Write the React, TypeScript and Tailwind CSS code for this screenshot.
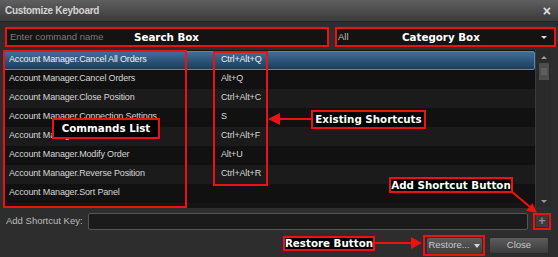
import React from "react";

const commands: { name: string; keys: string }[] = [
  { name: "Account Manager.Cancel All Orders", keys: "Ctrl+Alt+Q" },
  { name: "Account Manager.Cancel Orders", keys: "Alt+Q" },
  { name: "Account Manager.Close Position", keys: "Ctrl+Alt+C" },
  { name: "Account Manager.Connection Settings", keys: "S" },
  { name: "Account Manager.Flatten All", keys: "Ctrl+Alt+F" },
  { name: "Account Manager.Modify Order", keys: "Alt+U" },
  { name: "Account Manager.Reverse Position", keys: "Ctrl+Alt+R" },
  { name: "Account Manager.Sort Panel", keys: "" },
];

const ui = "font-['Liberation_Sans',Arial,sans-serif]";
const tag =
  "absolute flex items-center justify-center whitespace-nowrap bg-black border-2 border-[#ee1111] font-['DejaVu_Sans',Verdana,sans-serif] font-bold text-[10.3px] text-white leading-none";

function Arrows() {
  return (
    <svg
      className="pointer-events-none absolute left-0 top-0"
      width="558"
      height="257"
      viewBox="0 0 558 257"
    >
      {/* existing shortcuts */}
      <line x1="311" y1="119" x2="279" y2="119" stroke="#ee1111" strokeWidth="2" />
      <polygon points="268,119 280,113 280,125" fill="#ee1111" />
      {/* add shortcut */}
      <line x1="511" y1="191" x2="530" y2="207" stroke="#ee1111" strokeWidth="2" />
      <polygon points="537,213 532.5,203.3 526,210.8" fill="#ee1111" />
      {/* restore */}
      <line x1="375" y1="243" x2="412" y2="243" stroke="#ee1111" strokeWidth="2" />
      <polygon points="422,243 411,237 411,249" fill="#ee1111" />
    </svg>
  );
}

export default function App() {
  return (
    <div
      className={`relative h-[257px] w-[558px] overflow-hidden bg-[#2d2d2d] text-[#d6d6d6] ${ui}`}
    >
      {/* title bar */}
      <div className="flex h-[22px] items-center justify-between border-b border-[#262626] bg-linear-to-b from-[#5f5f5f] to-[#3b3b3b] pl-[5px] pr-[7px]">
        <span className="text-[10px] font-bold tracking-[-0.3px] text-[#d4d4d4]">
          Customize Keyboard
        </span>
        <span className="text-[14px] font-bold leading-none text-[#e0e0e0]">×</span>
      </div>

      <div className="pl-[3px]">
        {/* search + category */}
        <div className="mt-[5px] flex h-[20px] gap-[6px] pl-[2px]">
          <div className="relative flex w-[324px] items-center border-2 border-[#ee1111] bg-[#131313] pl-[3px]">
            <span className="text-[9.5px] text-[#7a7a7a]">Enter command name</span>
            <span className="absolute left-[127px] top-[3px] font-['DejaVu_Sans',Verdana,sans-serif] text-[10.3px] font-bold leading-none text-white">
              Search Box
            </span>
          </div>
          <div className="relative flex w-[221px] items-center justify-between border-2 border-[#ee1111] bg-[#131313] pl-[1px] pr-[7px]">
            <span className="text-[9.5px] text-[#bdbdbd]">All</span>
            <span className="absolute left-[65px] top-[3px] font-['DejaVu_Sans',Verdana,sans-serif] text-[10.3px] font-bold leading-none text-white">
              Category Box
            </span>
            <span className="h-0 w-0 border-x-[3px] border-t-[3px] border-x-transparent border-t-[#dcdcdc]" />
          </div>
        </div>

        {/* command list */}
        <div className="relative mt-[3px] flex h-[158px] w-[548px] bg-[#151515]">
          <div className="flex-1 pt-[0.5px]">
            {commands.map((c, i) => (
              <div
                key={c.name}
                className={
                  i === 0
                    ? "flex h-[19px] items-center rounded-[2px] border border-[#5288b8] bg-linear-to-b from-[#3f6f98] to-[#1c3d5b] text-[#f0f0f0]"
                    : `flex h-[19px] items-center border border-transparent ${
                        i % 2 === 1 ? "bg-[#111111]" : "bg-[#1b1b1b]"
                      }`
                }
              >
                <span className="w-[217px] pl-[5px] text-[9px] tracking-[-0.15px]">
                  {c.name}
                </span>
                <span className="text-[9px] tracking-[-0.15px]">{c.keys}</span>
              </div>
            ))}
          </div>

          {/* scrollbar */}
          <div className="flex w-[16px] flex-col items-center border-l border-[#3a3a3a] bg-[#2a2a2a] pt-[6px]">
            <span className="h-0 w-0 border-x-[3px] border-b-[3px] border-x-transparent border-b-[#9a9a9a]" />
            <div className="mt-[4px] flex h-[17px] w-[10px] items-center justify-center bg-[#4d4d4d]">
              <div className="h-[7px] w-[6px] bg-[#5e5e5e]" />
            </div>
            <div className="flex-1" />
            <span className="mb-[5px] h-0 w-0 border-x-[3px] border-t-[3px] border-x-transparent border-t-[#9a9a9a]" />
          </div>

          {/* highlighted columns */}
          <div className="pointer-events-none absolute left-0 top-0 h-[158px] w-[184px] border-2 border-[#ee1111]" />
          <div className="pointer-events-none absolute left-[210px] top-[1px] h-[135px] w-[55px] border-2 border-[#ee1111]" />
        </div>

        {/* add shortcut */}
        <div className="mt-[4px] flex h-[18px] items-center">
          <span className="w-[85px] pl-[3px] text-[9.5px] text-[#bcbcbc]">Add Shortcut Key:</span>
          <div className="h-[17px] w-[440px] rounded-[2px] border border-[#555555] bg-[#1b1b1b]" />
          <div className="ml-[5px] flex h-[17px] w-[18px] items-center justify-center border-2 border-[#ee1111]">
            <div className="flex h-[12px] w-[12px] items-center justify-center bg-[#3c3c3c] text-[12px] font-bold leading-none text-[#8c8c8c]">
              +
            </div>
          </div>
        </div>

        {/* footer buttons */}
        <div className="mt-[5px] flex items-center justify-end pr-[9px]">
          <div className="flex h-[21px] w-[62px] items-center justify-center border-2 border-[#ee1111]">
            <div className="flex h-[16px] w-[55px] items-center justify-center gap-[4px] rounded-[2px] bg-linear-to-b from-[#5d5d5d] to-[#3c3c3c] text-[9.5px] text-[#c8c8c8]">
              Restore...
              <span className="h-0 w-0 border-x-[3.5px] border-t-[4px] border-x-transparent border-t-[#d8d8d8]" />
            </div>
          </div>
          <div className="ml-[4px] flex h-[17px] w-[60px] items-center justify-center rounded-[2px] border border-[#2a2a2a] bg-linear-to-b from-[#5d5d5d] to-[#3c3c3c] text-[9.5px] text-[#c8c8c8]">
            Close
          </div>
        </div>
      </div>

      {/* annotation tags */}
      <div className={`${tag} left-[52px] top-[118px] h-[21px] w-[108px]`}>Commands List</div>
      <div className={`${tag} left-[311px] top-[110px] h-[19px] w-[115px]`}>Existing Shortcuts</div>
      <div className={`${tag} left-[389px] top-[177px] h-[16px] w-[124px]`}>Add Shortcut Button</div>
      <div className={`${tag} left-[283px] top-[236px] h-[15px] w-[92px]`}>Restore Button</div>

      <Arrows />
    </div>
  );
}
